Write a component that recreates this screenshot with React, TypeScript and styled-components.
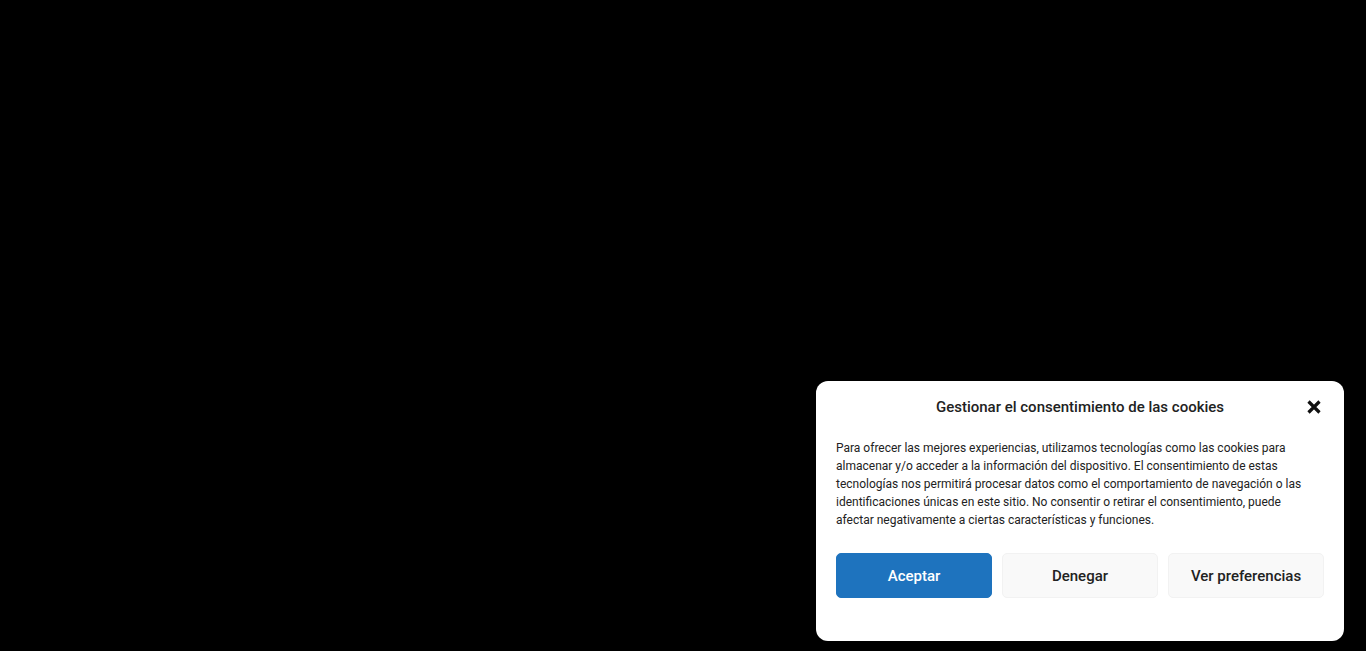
import styled, { createGlobalStyle } from "styled-components";

const GlobalStyle = createGlobalStyle`
  html, body {
    margin: 0;
    padding: 0;
    background: #000;
    height: 100%;
  }
  #root {
    height: 100%;
  }
`;

const Page = styled.div`
  width: 100%;
  height: 651px;
  background: #000;
  display: flex;
  align-items: flex-end;
  justify-content: flex-end;
  padding: 0 22px 10px 0;
  box-sizing: border-box;
  font-family: Roboto, "Liberation Sans", sans-serif;
`;

const Banner = styled.div`
  width: 528px;
  box-sizing: border-box;
  background: #fff;
  border-radius: 12px;
  padding: 0 20px 43px;
  color: #222;
`;

const Header = styled.div`
  height: 52px;
  display: grid;
  grid-template-columns: 40px 1fr 40px;
  align-items: center;
`;

const Title = styled.h2`
  margin: 0;
  grid-column: 2;
  text-align: center;
  font-size: 15px;
  font-weight: 500;
  line-height: 20px;
  color: #222;
`;

const Close = styled.button`
  grid-column: 3;
  justify-self: end;
  margin-right: 2px;
  width: 16px;
  height: 16px;
  padding: 0;
  border: 0;
  background: none;
  display: flex;
  align-items: center;
  justify-content: center;
  cursor: pointer;
`;

const Message = styled.p`
  margin: 6px 0 0;
  max-width: 472px;
  font-size: 12px;
  line-height: 18px;
  color: #222;
`;

const Buttons = styled.div`
  margin-top: 24px;
  display: grid;
  grid-template-columns: repeat(3, 1fr);
  gap: 10px;
`;

const Button = styled.button<{ $primary?: boolean }>`
  height: 45px;
  border-radius: 5px;
  font-family: Roboto, "Liberation Sans", sans-serif;
  font-size: 15px;
  font-weight: 500;
  cursor: pointer;
  background: ${(p) => (p.$primary ? "#1e73be" : "#f9f9f9")};
  border: 1px solid ${(p) => (p.$primary ? "#1e73be" : "#f2f2f2")};
  color: ${(p) => (p.$primary ? "#fff" : "#222")};
`;

function App() {
  return (
    <Page>
      <GlobalStyle />
      <Banner>
        <Header>
          <Title>Gestionar el consentimiento de las cookies</Title>
          <Close aria-label="Cerrar">
            <svg width="16" height="16" viewBox="0 0 16 16">
              <path
                d="M2.5 2.5 L13.5 13.5 M13.5 2.5 L2.5 13.5"
                stroke="#111"
                strokeWidth="3.2"
                strokeLinecap="butt"
              />
            </svg>
          </Close>
        </Header>
        <Message>
          Para ofrecer las mejores experiencias, utilizamos tecnologías como las
          cookies para almacenar y/o acceder a la información del dispositivo. El
          consentimiento de estas tecnologías nos permitirá procesar datos como
          el comportamiento de navegación o las identificaciones únicas en este
          sitio. No consentir o retirar el consentimiento, puede afectar
          negativamente a ciertas características y funciones.
        </Message>
        <Buttons>
          <Button $primary>Aceptar</Button>
          <Button>Denegar</Button>
          <Button>Ver preferencias</Button>
        </Buttons>
      </Banner>
    </Page>
  );
}

export default App;
